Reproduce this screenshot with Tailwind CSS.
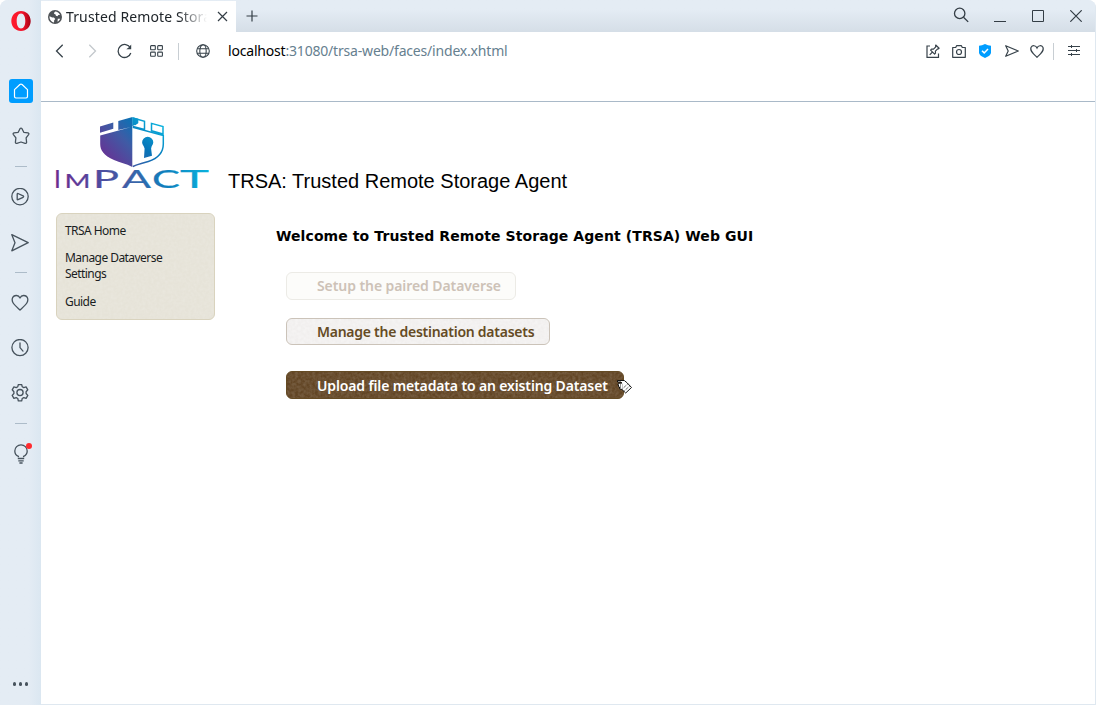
<!DOCTYPE html>
<html lang="en">
<head>
<meta charset="utf-8">
<title>Trusted Remote Storage Agent</title>
<script src="https://cdn.jsdelivr.net/npm/@tailwindcss/browser@4"></script>
</head>
<body class="w-[1096px] h-[705px] overflow-hidden bg-white">
<svg class="absolute size-0" aria-hidden="true">
  <defs>
    <filter id="grain" x="0" y="0" width="100%" height="100%"><feTurbulence type="fractalNoise" baseFrequency="0.35" numOctaves="2" seed="4"/><feColorMatrix values="0 0 0 0 1  0 0 0 0 1  0 0 0 0 1  1.2 0 0 0 -0.3"/></filter>
    <linearGradient id="brand" gradientUnits="userSpaceOnUse" x1="0" y1="60" x2="150" y2="40"><stop offset="0" stop-color="#6a2c91"/><stop offset=".5" stop-color="#3c62a8"/><stop offset=".72" stop-color="#0f7fbd"/><stop offset="1" stop-color="#0ab0dc"/></linearGradient>
    <linearGradient id="shieldL" gradientUnits="userSpaceOnUse" x1="42" y1="40" x2="80" y2="5"><stop offset="0" stop-color="#6d2c91"/><stop offset=".6" stop-color="#3f5ba5"/><stop offset="1" stop-color="#0873b6"/></linearGradient>
    <linearGradient id="shieldR" gradientUnits="userSpaceOnUse" x1="74" y1="50" x2="108" y2="10"><stop offset="0" stop-color="#4459a4"/><stop offset=".45" stop-color="#0874b8"/><stop offset="1" stop-color="#08b2de"/></linearGradient>
    <linearGradient id="opera" x1="0" x2="1"><stop offset="0" stop-color="#ff1b2d"/><stop offset=".55" stop-color="#f5142b"/><stop offset="1" stop-color="#a70014"/></linearGradient>
  </defs>
</svg>
<div class="flex w-full h-full overflow-hidden rounded-t-lg bg-[#e4ecf4] font-['Noto_Sans',sans-serif]">
  <!-- sidebar -->
  <nav class="flex w-[41px] shrink-0 flex-col items-center bg-linear-to-r from-[#e4ecf4] from-70% to-[#dbe7f1] pr-px text-[#47535d]">
    <div class="grid h-[42px] place-items-center pl-px"><svg width="20" height="20" viewBox="0 0 20 20"><path fill="url(#opera)" fill-rule="evenodd" d="M10 0C4.600 0 .3 4.300 .3 10s4.300 10 9.700 10 9.700-4.300 9.700-10S15.400 0 10 0Zm0 2.500c2.800 0 4.300 3.400 4.300 7.500s-1.500 7.500-4.300 7.500-4.300-3.400-4.300-7.500S7.200 2.500 10 2.500Z"/></svg></div>
    <div class="mt-[27px] grid h-[44px] place-items-center pl-px"><div class="grid size-6 place-items-center rounded-[3px] bg-[#009dff] text-white"><svg width="18" height="18" viewBox="0 0 18 18" fill="none" stroke="currentColor" stroke-width="1.200" stroke-linejoin="round"><path d="M2.500 7.600 7.900 2.500q1.100-.9 2.200 0l5.400 5.100v7q0 1.400-1.400 1.400H3.900q-1.400 0-1.400-1.400Z"/></svg></div></div>
    <div class="grid h-[46px] place-items-center pl-px"><svg width="18" height="18" viewBox="0 0 18 18" fill="none" stroke="currentColor" stroke-width="1.300" stroke-linejoin="round"><path d="M8 1.700q1-1.300 2 0l1.800 3.600 4.200.6q1.400.5.600 1.700l-2.500 3.200.5 4.600q-.2 1.200-1.500.9L9 15l-4.100 1.300q-1.300.3-1.500-.9l.5-4.600L1.400 7.600Q.6 6.400 2 5.900l4.200-.6Z"/></svg></div>
    <div class="grid h-[15px] place-items-center pl-px"><div class="h-px w-3 bg-[#adbcc9]"></div></div>
    <div class="grid h-[46px] place-items-center"><svg width="18" height="18" viewBox="0 0 18 18" fill="none" stroke="currentColor" stroke-width="1.300" stroke-linejoin="round"><circle cx="9" cy="8.600" r="8.200"/><path d="M6.200 6q0-.8.800-.5l5.100 2.400q1.100.7 0 1.400L7 11.700q-.8.300-.8-.5Z"/></svg></div>
    <div class="grid h-[45px] place-items-center"><svg width="18" height="18" viewBox="0 0 18 18" fill="none" stroke="currentColor" stroke-width="1.300" stroke-linejoin="round"><path d="m.8.700 16.400 8L.8 16.800 4 8.700Z"/></svg></div>
    <div class="grid h-[15px] place-items-center pl-px"><div class="h-px w-3 bg-[#adbcc9]"></div></div>
    <div class="grid h-[45px] place-items-center"><svg width="18" height="18" viewBox="0 0 18 18" fill="none" stroke="currentColor" stroke-width="1.300" stroke-linejoin="round"><path d="M9 4C7.500.8 3.300.7 1.700 3.400-.5 8.200 4.300 11.700 9 16 13.700 11.700 18.500 8.200 16.300 3.400 14.700.7 10.500.8 9 4Z"/></svg></div>
    <div class="grid h-[45px] place-items-center"><svg width="18" height="18" viewBox="0 0 18 18" fill="none" stroke="currentColor" stroke-width="1.300" stroke-linecap="round"><circle cx="9" cy="8.600" r="8.100"/><path d="M9 4v4.600l3 3.500"/></svg></div>
    <div class="grid h-[45px] place-items-center"><svg width="18" height="18" viewBox="0 .4 18 18" fill="none" stroke="currentColor" stroke-width="1.300" stroke-linejoin="round"><circle cx="9" cy="9" r="3.100"/><path d="M7.300 1h3.400l.5 2.100 1.600.9 2.300-.7 1.700 2.900-1.700 1.900v1.800l1.700 1.900-1.700 2.900-2.300-.7-1.600.9-.5 2.300H7.300l-.5-2.300-1.600-.9-2.300.7-1.700-2.900 1.700-1.900V8.100L1.200 6.200l1.700-2.900 2.300.7 1.600-.9Z"/></svg></div>
    <div class="grid h-[16px] place-items-center pl-px"><div class="h-px w-3 bg-[#adbcc9]"></div></div>
    <div class="relative grid h-[46px] place-items-center"><svg width="18" height="22" viewBox="0 0 18 22" fill="none" stroke="currentColor" stroke-width="1.300"><path d="M7.400 14.200v-.9C4.800 12.300 3.800 10.200 3.800 8a6.200 6.200 0 0 1 12.400 0c0 2.200-1.200 4.300-3.600 5.300v.9"/><path d="M6.800 15.500h6.400M7.300 17.800h5.400M8.400 20h3.200"/></svg><span class="absolute -right-[3px] top-3 size-[6px] rounded-full bg-[#ff2b2f]"></span></div>
    <div class="mt-auto flex h-[42px] items-center gap-[2.500px] pl-px"><i class="size-[3.500px] rounded-full bg-current"></i><i class="size-[3.500px] rounded-full bg-current"></i><i class="size-[3.500px] rounded-full bg-current"></i></div>
  </nav>

  <div class="flex min-w-0 flex-1 flex-col border-r border-b border-[#dfe8f0]">
    <!-- tabs -->
    <header class="flex h-8 shrink-0 items-stretch bg-linear-to-b from-[#e4ecf4] from-30% to-[#d5dee7] text-[#333d45]">
      <div class="mt-px flex w-[195px] items-center bg-white pl-[7px]">
        <svg width="14" height="14" viewBox="0 0 14 14"><circle cx="7" cy="7" r="7" fill="#4e5256"/><path fill="#fff" d="M7.200 1.600c2 .1 4 1.400 4.800 3.300l-1.700.2-.8 1.200-1.600-.6-.3-1.200-1.600-.7.300-1.300ZM1.500 6.200l2.700 1.300 1.700 0 1.400 1.400-1.100 1.400-.2 2.100C3.100 11.900 1.300 9.200 1.500 6.200Zm8.300 2.600 2.300-.1c-.4 1.300-1.300 2.400-2.600 3Z"/></svg>
        <span class="ml-1 w-[144px] overflow-hidden whitespace-nowrap text-[14px] leading-[30px] tracking-[0.120px] text-[#20262b] [mask-image:linear-gradient(to_right,#000_78%,transparent_98%)]">Trusted Remote Storage Agent</span>
        <svg class="ml-[7px]" width="11" height="11" viewBox="0 0 11 11" stroke="currentColor" stroke-width="1.200"><path d="m1 1 9 9M10 1l-9 9"/></svg>
      </div>
      <svg class="ml-[10px] mt-[10px]" width="12" height="12" viewBox="0 0 12 12" stroke="currentColor" stroke-width="1.200"><path d="M6 .5v11M.5 6h11"/></svg>
      <div class="ml-auto flex items-center pr-[13px]">
        <svg class="mr-[25px] mt-[-2px]" width="16" height="16" viewBox="0 0 16 16" fill="none" stroke="currentColor" stroke-width="1.300"><circle cx="6.700" cy="6.400" r="5.200"/><path d="m10.500 10.200 4.700 4.700"/></svg>
        <svg class="mr-[26px]" width="12" height="12" viewBox="0 0 12 12" stroke="currentColor" stroke-width="1"><path d="M0 11.500h12"/></svg>
        <svg class="mr-[26px]" width="12" height="12" viewBox="0 0 12 12" fill="none" stroke="currentColor"><path d="M.5.5h11v11H.5Z"/></svg>
        <svg width="12" height="12" viewBox="0 0 12 12" stroke="currentColor" stroke-width="1.200"><path d="m.3.300 11.400 11.400M11.700.3.300 11.700"/></svg>
      </div>
    </header>

    <!-- address bar -->
    <div class="flex h-[38px] shrink-0 items-center bg-white pl-[14px] pr-[15px] text-[#37424a]">
      <svg width="9" height="14" viewBox="0 0 9 14" fill="none" stroke="currentColor" stroke-width="1.300"><path d="M7.700.7 1.500 7l6.200 6.300"/></svg>
      <svg class="ml-[24px] text-[#c3c8cc]" width="9" height="14" viewBox="0 0 9 14" fill="none" stroke="currentColor" stroke-width="1.300"><path d="M1.300.7 7.500 7l-6.200 6.300"/></svg>
      <svg class="ml-[20px]" width="16" height="16" viewBox="0.500 0 16 16" fill="none" stroke="currentColor" stroke-width="1.300"><path d="M13.900 5A6.500 6.500 0 1 0 14.300 10"/><path fill="currentColor" stroke="none" d="M14.700 1.500v4.800H9.800l2.600-2Z"/></svg>
      <svg class="ml-[17px]" width="13" height="12" viewBox="0 0 13 12" fill="none" stroke="currentColor" stroke-width="1.100"><rect x=".6" y=".6" width="4.700" height="4.200" rx=".7"/><rect x="7.700" y=".6" width="4.700" height="4.200" rx=".7"/><rect x=".6" y="7.100" width="4.700" height="4.200" rx=".7"/><rect x="7.700" y="7.100" width="4.700" height="4.200" rx=".7"/></svg>
      <div class="ml-[15px] h-[17px] w-px bg-[#c8ced3]"></div>
      <svg class="ml-[17px]" width="14" height="14" viewBox="0 0 14 14" fill="none" stroke="currentColor" stroke-width="1.100"><circle cx="7" cy="7" r="6.300"/><ellipse cx="7" cy="7" rx="3.200" ry="6.300"/><path d="M1.300 4.700h11.400M1.300 9.300h11.400"/></svg>
      <div class="ml-[18px] mb-0.5 whitespace-nowrap text-[14px] tracking-[-0.190px] text-[#66808f]"><span class="text-black">localhost</span>:31080/trsa-web/faces/index.xhtml</div>
      <div class="ml-auto flex items-center">
        <svg width="14" height="14" viewBox="0 0 14 14" fill="none" stroke="currentColor" stroke-width="1.200"><path d="M4 2H1v11.300h11.500V9.500"/><path stroke-linejoin="round" d="m9.700 1 3.400 3.300-.9.600-.5-.1-2.300 2.400.1 2-.9.900-4-4 .9-1 2 .1 2.300-2.400-.2-.7ZM6.500 8 3.700 10.800"/></svg>
        <svg class="ml-[12px]" width="14" height="13" viewBox="0 0 14 13" fill="none" stroke="currentColor" stroke-width="1.200"><path stroke-linejoin="round" d="M.7 2.500h3L4.600.7h4.800l.9 1.800h3v9.800H.7Z"/><circle cx="7" cy="7" r="2.500"/></svg>
        <svg class="ml-[13px]" width="12" height="14" viewBox="0 0 12 14"><path fill="#009dff" d="M6 0q3 1.500 6 1.700V9q-.5 2.800-6 5Q.5 11.800 0 9V1.700Q3 1.500 6 0Z"/><path fill="none" stroke="#fff" stroke-width="1.500" d="m3 6.700 2.200 2.200L9 4.900"/></svg>
        <svg class="ml-[14px]" width="14" height="12" viewBox="0 0 14 12" fill="none" stroke="currentColor" stroke-width="1.200" stroke-linejoin="round"><path d="M.7.700 13.300 6 .7 11.300 3.200 6Z"/></svg>
        <svg class="ml-[11px] mt-px" width="14" height="13" viewBox="0 0 14 13" fill="none" stroke="currentColor" stroke-width="1.200"><path d="M7 2.900C5.800.2 2.400 0 1.100 2.300-.4 6 3.300 8.700 7 12.300 10.700 8.700 14.400 6 12.900 2.300 11.600 0 8.200.2 7 2.900Z"/></svg>
        <div class="ml-[9px] h-[17px] w-px bg-[#c8ced3]"></div>
        <svg class="ml-[14px] mb-px" width="12" height="11" viewBox="0 0 12 11" fill="none" stroke="currentColor"><path d="M0 1.500h12M0 5.500h12M0 9.500h12M3.500 0v3M8.500 4v3M3.500 8v3"/></svg>
      </div>
    </div>
    <div class="h-8 shrink-0 border-b border-[#a9b9c8] bg-white"></div>

    <!-- page -->
    <main class="flex-1 bg-white pl-[14px] pt-[14px]">
      <div class="flex h-[76px]">
        <svg class="shrink-0 overflow-visible" width="156" height="76" viewBox="0 0 156 76">
          <path fill="url(#shieldL)" d="M45 10.500 58.300 6.600v6.200L45 16.700ZM63.300 5 77.500 1v9.800L63.300 14ZM45.200 19.500 77.300 10.800V51C71 47.500 65 46.500 59 44 48.500 39.500 45.200 34 45.200 28Z"/>
          <g fill="none" stroke="url(#shieldR)" stroke-width="1.500"><path d="M78 2 89.500 5.200v8.300L78 10.500M79.500 9 83 6.500M96.500 7.400l11.500 3.200v7.300l-11.500-3.200ZM77.800 11.200 108.300 19.500V28c0 9-6 14.500-15 17.500-6 2-10 2.600-15.500 5"/></g>
          <path fill="url(#shieldR)" d="M77.300 1.200l6 1.600v4l-6 3.500ZM88.700 30.300a5.600 5.600 0 1 1 8 0l-.6 2.200.9 7.200-8 2.400.6-9.600Z"/>
          <g fill="url(#brand)" stroke="url(#brand)" stroke-width=".2" font-family="Lato, sans-serif" font-size="24.500"><text y="71.800" x="-1">I</text><text y="71.800" x="9.500" font-size="19" textLength="26" lengthAdjust="spacingAndGlyphs">M</text><text y="71.800" x="38" textLength="26" lengthAdjust="spacingAndGlyphs">P</text><text y="71.800" x="67" textLength="29" lengthAdjust="spacingAndGlyphs">A</text><text y="71.800" x="97" textLength="28" lengthAdjust="spacingAndGlyphs">C</text><text y="71.800" x="125" textLength="29" lengthAdjust="spacingAndGlyphs">T</text></g>
        </svg>
        <h1 class="ml-[17px] mt-[50px] whitespace-nowrap font-['Liberation_Sans',Arial,sans-serif] text-[20px] leading-[30px] text-black">TRSA: Trusted Remote Storage Agent</h1>
      </div>
      <div class="ml-px mt-[21px] flex items-start">
        <div class="relative h-[107px] w-[159px] overflow-hidden rounded-[6px] border border-[#d9d3be] bg-[#e6e3d8]">
          <svg class="absolute inset-0 size-full opacity-20"><rect width="100%" height="100%" filter="url(#grain)"/></svg>
          <ul class="relative pl-2 pt-[9px] text-[12px] leading-4 tracking-[-0.550px] text-[#1a1d1f]">
            <li>TRSA Home</li><li class="mt-[11px]">Manage Dataverse<br>Settings</li><li class="mt-3">Guide</li>
          </ul>
        </div>
        <section class="ml-[61px] pt-[14px]">
          <h2 class="whitespace-nowrap font-['DejaVu_Sans',Verdana,sans-serif] text-[14px] leading-[18px] font-bold tracking-[0.090px] text-black">Welcome to Trusted Remote Storage Agent (TRSA) Web GUI</h2>
          <div class="ml-[10px] mt-[27px] flex flex-col items-start text-[14px] font-semibold">
            <button class="h-7 w-[230px] whitespace-nowrap rounded-[6px] border border-[#ecebe6] bg-[#fcfcfa] pb-0.5 pl-[30px] text-left tracking-[-0.080px] text-[#cdc2b7]">Setup the paired Dataverse</button>
            <button class="relative mt-[18px] h-[27px] w-[264px] overflow-hidden whitespace-nowrap rounded-[6px] border border-[#cbc3b9] bg-[#f1efee] pl-[30px] text-left tracking-[-0.260px] text-[#654b24]"><svg class="absolute inset-0 size-full opacity-50"><rect width="100%" height="100%" filter="url(#grain)"/></svg><span class="relative">Manage the destination datasets</span></button>
            <div class="relative mt-[26px]">
              <button class="relative block h-7 w-[338px] overflow-hidden whitespace-nowrap rounded-[6px] border border-[#654b24] bg-[#624524] pl-[30px] text-left tracking-[-0.140px] text-white"><svg class="absolute inset-0 size-full opacity-20"><rect width="100%" height="100%" filter="url(#grain)"/></svg><span class="relative">Upload file metadata to an existing Dataset</span></button>
              <svg class="absolute left-[330px] top-[8px]" width="17" height="16" viewBox="0 0 17 16" fill="#fff" stroke="#000" stroke-width=".9"><path d="M1.500 1.500h6.800l3 2.500L15.500 8.500 9.700 14 6 10.500l-2.500-.8V8l-1-.5V6l-.7-1 1-.8h3L5 3H1.500Z"/><path fill="none" stroke-dasharray="1 1" d="m6.500 9.800 5.300-5M8.500 11.800l5.300-5M4 6h2.500M4 8h2.500"/></svg>
            </div>
          </div>
        </section>
      </div>
    </main>
  </div>
</div>
</body>
</html>
